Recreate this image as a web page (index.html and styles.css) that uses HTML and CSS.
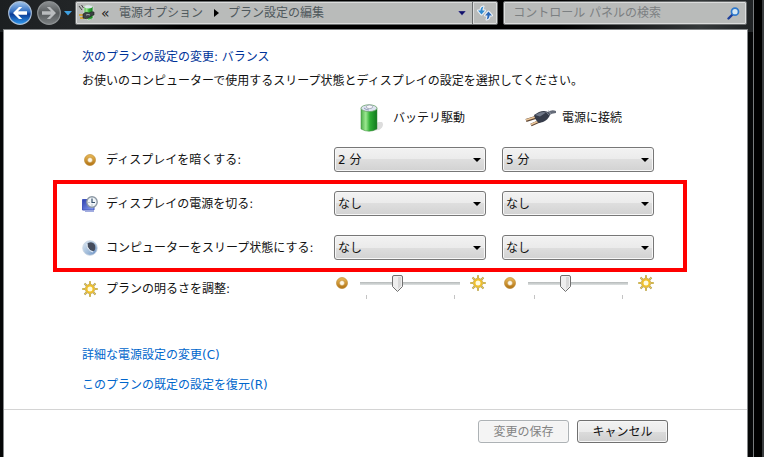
FILE: index.html
```html
<!doctype html>
<html lang="ja">
  <head>
    <meta charset="UTF-8" />
    <title>プラン設定の編集</title>
    <link rel="stylesheet" href="styles.css">
  </head>
  <body>
    <!-- shared icons -->
    <svg class="defs" width="0" height="0" aria-hidden="true">
      <defs>
        <linearGradient id="gold" x1="0" y1="0" x2="0" y2="1">
          <stop offset="0" stop-color="#e3b251" />
          <stop offset="1" stop-color="#b87a1a" />
        </linearGradient>
        <linearGradient id="green" x1="0" y1="0" x2="1" y2="0">
          <stop offset="0" stop-color="#4fae4c" />
          <stop offset="0.3" stop-color="#9be890" />
          <stop offset="0.55" stop-color="#2fae35" />
          <stop offset="1" stop-color="#117a1e" />
        </linearGradient>
        <linearGradient id="screen" x1="0" y1="0" x2="1" y2="1">
          <stop offset="0" stop-color="#2c3fae" />
          <stop offset="1" stop-color="#8fa6f5" />
        </linearGradient>
        <linearGradient id="moon" x1="0" y1="0" x2="1" y2="1">
          <stop offset="0" stop-color="#dfe9f3" />
          <stop offset="0.6" stop-color="#9db9d8" />
          <stop offset="1" stop-color="#5f86c0" />
        </linearGradient>
        <linearGradient id="blue" x1="0" y1="0" x2="0" y2="1">
          <stop offset="0" stop-color="#9fc4ec" />
          <stop offset="0.45" stop-color="#2f6cc0" />
          <stop offset="0.55" stop-color="#0b3a94" />
          <stop offset="1" stop-color="#2f9af0" />
        </linearGradient>
        <linearGradient id="grey" x1="0" y1="0" x2="0" y2="1">
          <stop offset="0" stop-color="#8c9092" />
          <stop offset="0.5" stop-color="#55595b" />
          <stop offset="1" stop-color="#7d8183" />
        </linearGradient>
      </defs>
      <symbol id="icon-ring" viewBox="0 0 16 16">
        <circle cx="8" cy="8" r="4" fill="none" stroke="url(#gold)" stroke-width="3.4" />
        <circle cx="8" cy="8" r="5.5" fill="none" stroke="#b98a3c" stroke-width="0.5" />
        <circle cx="8" cy="8" r="2.5" fill="#fff8e6" stroke="#b98632" stroke-width="0.5" />
      </symbol>
      <symbol id="icon-sun" viewBox="0 0 16 16">
        <path d="M8 0.3V3M8 13v2.7M0.3 8H3M13 8h2.7M2.5 2.5l2 2M11.5 11.5l2 2M2.5 13.5l2-2M11.5 4.5l2-2" stroke="#b3a05a" stroke-width="2" />
        <path d="M8 0.6V3M8 13v2.4M0.6 8H3M13 8h2.4M2.8 2.8l1.7 1.7M11.5 11.5l1.7 1.7M2.8 13.2l1.7-1.7M11.5 4.5l1.7-1.7" stroke="#f2cf45" />
        <circle cx="8" cy="8" r="3.6" fill="#fffbe0" stroke="#efc02a" stroke-width="2.2" />
        <circle cx="8" cy="8" r="4.8" fill="none" stroke="#b08a2a" stroke-width="0.5" />
      </symbol>
    </svg>

    <div class="window">
      <header class="toolbar">
        <nav class="history">
          <button class="round-btn" aria-label="戻る">
            <svg width="24" height="24" viewBox="0 0 24 24">
              <circle cx="12" cy="12" r="11.3" fill="url(#blue)" stroke="#a9bfd8" stroke-width="1.2" />
              <path d="M5 12l6-6h3.2l-4.2 4.3h9v3.4h-9l4.2 4.3H11z" fill="#fff" />
            </svg>
          </button>
          <button class="round-btn" aria-label="進む">
            <svg width="24" height="24" viewBox="0 0 24 24">
              <circle cx="12" cy="12" r="11.3" fill="url(#grey)" stroke="#8d9193" stroke-width="1.2" />
              <path d="M19 12l-6-6H9.800l4.200 4.300H5v3.400h9l-4.200 4.300H13z" fill="#b9bcbe" />
            </svg>
          </button>
          <button class="history-menu" aria-label="最近のページ">
            <svg width="8" height="5" viewBox="0 0 8 5"><path d="M0 0h8L4 4.500z" fill="#3fa0e0" /></svg>
          </button>
        </nav>

        <div class="address">
          <svg width="18" height="18" viewBox="0 0 18 18" aria-hidden="true">
            <path d="M6 2.500q4-2.500 9 0v12q-4 3-9 0z" fill="url(#green)" stroke="#d9e6d6" stroke-width="0.8" />
            <ellipse cx="10.500" cy="2.800" rx="3.800" ry="1.600" fill="#dfe5ee" />
            <path d="M1 2l3 4M3.500 1l2 3" stroke="#444" stroke-width="1" />
            <path d="M1 11h4M2 14h4" stroke="#d8a018" stroke-width="1.600" />
            <path d="M5 10q3-3 6-1 3-2 5-1v3q-2 0-4 2-3 3-7 1z" fill="#3c4144" stroke="#222" stroke-width="0.600" />
            <path d="M8 11q2-1 4 0" stroke="#a4aaae" fill="none" />
          </svg>
          <span class="chevrons">«</span>
          <a class="crumb" href="#">電源オプション</a>
          <svg width="5" height="8" viewBox="0 0 5 8" aria-hidden="true"><path d="M0 0l5 4-5 4z" fill="#000" /></svg>
          <a class="crumb" href="#">プラン設定の編集</a>
          <button class="address-menu" aria-label="以前の場所">
            <svg width="8" height="5" viewBox="0 0 8 5"><path d="M0 0h8L4 4.500z" fill="#10106a" stroke="#e4e4ea" stroke-width="0.300" /></svg>
          </button>
          <button class="refresh" aria-label="最新の情報に更新">
            <svg width="16" height="16" viewBox="0 0 16 16">
              <g stroke="#eef4fa" stroke-width="2" stroke-linejoin="round" fill="#eef4fa">
                <path d="M6.500 1.500Q3.500 2 3.500 5.500H1L4.500 9.500 8 5.500H5.500Q5.500 3.500 6.500 1.500z" />
                <path d="M9.500 14.500q3-.5 3-4H15l-3.500-4-3.500 4h2.500q0 2-1 4z" />
              </g>
              <path d="M6.500 1.500Q3.500 2 3.500 5.500H1L4.500 9.500 8 5.500H5.500Q5.500 3.500 6.500 1.500z" fill="#318bd0" />
              <path d="M9.500 14.500q3-.5 3-4H15l-3.500-4-3.500 4h2.500q0 2-1 4z" fill="#2a68b8" />
            </svg>
          </button>
        </div>

        <label class="search">
          <input type="search" placeholder="コントロール パネルの検索" aria-label="コントロール パネルの検索" />
          <svg width="13" height="13" viewBox="0 0 13 13" aria-hidden="true">
            <path d="M6 7L1.500 11.500" stroke="#1d3f9c" stroke-width="2.400" stroke-linecap="round" />
            <circle cx="8" cy="4.700" r="3.500" fill="#d6e8f4" stroke="#2d78cc" stroke-width="1.700" />
          </svg>
        </label>
      </header>

      <main class="content">
        <div class="block">
          <h1>次のプランの設定の変更: バランス</h1>
          <p>お使いのコンピューターで使用するスリープ状態とディスプレイの設定を選択してください。</p>
        </div>

        <div class="block row sources">
          <span></span>
          <div class="source">
            <svg width="24" height="30" viewBox="0 0 24 30" aria-hidden="true">
              <path d="M10 28l9-1q6-4 3-8l-4 0z" fill="#bbb" opacity="0.5" />
              <path d="M1 5.500q8 4 16 0v20.500q-8 4.500-16 0z" fill="url(#green)" stroke="#3d8a3d" stroke-width="0.500" />
              <ellipse cx="9" cy="5.200" rx="8" ry="3.400" fill="#dde3f0" stroke="#6ba36b" stroke-width="0.800" />
              <ellipse cx="9.500" cy="3.800" rx="3.200" ry="1.800" fill="#f6f7fa" stroke="#8d93a6" stroke-width="0.700" />
              <path d="M4 5q2 2 5 2" fill="none" stroke="#7e8aa8" stroke-width="0.800" />
            </svg>
            <span>バッテリ駆動</span>
          </div>
          <div class="source plugged">
            <svg width="33" height="18" viewBox="0 0 33 18" aria-hidden="true">
              <path d="M13 8L2 11.500M16 12l-9 4" stroke="#5d4534" stroke-width="3" />
              <path d="M13 7.500L2 11M16 11.500l-9 4" stroke="#ecc79a" stroke-width="1.600" />
              <path d="M32 2q-5-2-10 2l2 3q4-3 8-3z" fill="#656b78" />
              <path d="M10 6l5-3q5-2 9 0l2 3q-2 5-7 7l-4 1q-4-3-5-8z" fill="#363c4a" />
              <path d="M11 6l5-2.500q4-1 6 0l-6 4z" fill="#717989" />
              <path d="M22 2.500l3.500 4M24.500 1.500L27 5" stroke="#969dab" stroke-width="0.800" />
            </svg>
            <span>電源に接続</span>
          </div>
        </div>

        <div class="block row first">
          <div class="setting">
            <svg width="16" height="16" aria-hidden="true"><use href="#icon-ring" /></svg>
            <span id="dimLabel">ディスプレイを暗くする:</span>
          </div>
          <select aria-labelledby="dimLabel"><option>2 分</option></select>
          <select aria-labelledby="dimLabel"><option>5 分</option></select>
        </div>

        <div class="highlight">
          <div class="row">
            <div class="setting">
              <svg width="16" height="16" viewBox="0 0 16 16" aria-hidden="true">
                <path d="M0.500 3.500H12V14H0.500z" fill="url(#screen)" stroke="#4356bd" />
                <path d="M3 15.300h9" stroke="#98a4dc" stroke-width="1.200" />
                <circle cx="10" cy="6" r="5.200" fill="#f1f5f8" stroke="#8b97a3" stroke-width="1.400" />
                <path d="M10 2.500V6.500h3" fill="none" stroke="#36506c" stroke-width="1.200" />
                <path d="M6.500 6.500h1M10 9.500v-1" stroke="#8093a7" />
              </svg>
              <span id="offLabel">ディスプレイの電源を切る:</span>
            </div>
            <select aria-labelledby="offLabel"><option>なし</option></select>
            <select aria-labelledby="offLabel"><option>なし</option></select>
          </div>
          <div class="row">
            <div class="setting">
              <svg width="16" height="16" viewBox="0 0 16 16" aria-hidden="true">
                <circle cx="8" cy="8" r="7.300" fill="url(#moon)" stroke="#c9d4e0" stroke-width="0.800" />
                <path d="M6 3q5-2 7 2 1 4-1 6-5 0-7-5 0-2 1-3z" fill="#454c5c" />
                <path d="M5 4q0 6 6 8" fill="none" stroke="#f0f5fa" stroke-width="1" />
              </svg>
              <span id="sleepLabel">コンピューターをスリープ状態にする:</span>
            </div>
            <select aria-labelledby="sleepLabel"><option>なし</option></select>
            <select aria-labelledby="sleepLabel"><option>なし</option></select>
          </div>
        </div>

        <div class="block row brightness">
          <div class="setting">
            <svg width="16" height="16" aria-hidden="true"><use href="#icon-sun" /></svg>
            <span id="brightLabel">プランの明るさを調整:</span>
          </div>
          <div class="slider">
            <svg width="16" height="16" aria-hidden="true"><use href="#icon-ring" /></svg>
            <input type="range" min="0" max="100" value="36" aria-labelledby="brightLabel" />
            <svg width="16" height="16" aria-hidden="true"><use href="#icon-sun" /></svg>
          </div>
          <div class="slider">
            <svg width="16" height="16" aria-hidden="true"><use href="#icon-ring" /></svg>
            <input type="range" min="0" max="100" value="36" aria-labelledby="brightLabel" />
            <svg width="16" height="16" aria-hidden="true"><use href="#icon-sun" /></svg>
          </div>
        </div>

        <div class="block links">
          <a href="#">詳細な電源設定の変更(C)</a>
          <a href="#">このプランの既定の設定を復元(R)</a>
        </div>

        <footer class="actions">
          <button class="btn" disabled>変更の保存</button>
          <button class="btn">キャンセル</button>
        </footer>
      </main>
    </div>
  </body>
</html>
```
FILE: styles.css
```css
:root {
  --heading-color: #003399;
  --link-color: #0066cc;
  --text-color: #111;
  --field-color: #b9bbba;
  --highlight-color: #ff0000;
}

* {
  margin: 0;
  padding: 0;
  box-sizing: border-box;
}

body {
  display: flex;
  min-height: 100vh;
  padding-right: 8px;
  background-color: #000;
  border-right: 2px solid #3a3d3f;
  color: var(--text-color);
  font-family: "DejaVu Sans", "Noto Sans CJK JP", sans-serif;
  font-size: 12px;
  line-height: 24px;
}

.defs {
  position: absolute;
}

svg {
  display: block;
  flex: none;
}

button,
input,
select {
  font: inherit;
}

.window {
  flex: 1;
  display: flex;
  flex-direction: column;
  padding: 0 5px 0 3px;
  background: linear-gradient(90deg, #1c1f21 0, #222527 70px, #000 180px, #000 560px, #34383a 700px, #202325 100%) top / 100% 32px no-repeat #050607;
  border-right: 1px solid #777a7c;
}

/* toolbar */

.toolbar {
  display: flex;
  height: 29px;
  padding: 1px 1px 4px 5px;
}

.history {
  display: flex;
  align-items: center;
  gap: 5px;
  width: 67px;
}

.round-btn {
  height: 24px;
  background: none;
  border: none;
  border-radius: 50%;
}

.history-menu,
.address-menu,
.refresh {
  background: none;
  border: none;
}

.history-menu {
  margin-left: -2px;
}

.address,
.search {
  display: flex;
  align-items: center;
  background-color: var(--field-color);
  border: 1px solid #696c6d;
  border-radius: 2px;
  box-shadow: inset 0 0 0 1px #dcdddd;
}

.address {
  flex: 436;
  padding-left: 2px;
}

.chevrons {
  width: 23px;
  padding-left: 5px;
  color: #222;
  font-size: 14px;
}

.crumb {
  margin-right: 11px;
  color: #4f585c;
  text-decoration: none;
}

.address svg + .crumb {
  margin-left: 9px;
}

.address-menu {
  margin-left: auto;
  padding: 0 6px;
}

.refresh {
  align-self: stretch;
  padding: 0 4px;
  border-left: 1px solid #686b6c;
  box-shadow: inset 1px 0 #dcdddd;
}

.search {
  flex: 236;
  margin-left: 5px;
  padding: 0 6px 0 9px;
}

.search input {
  flex: 1;
  min-width: 0;
  background: none;
  border: none;
  outline: none;
}

.search input::placeholder {
  color: #7c8082;
}

/* content */

.content {
  flex: 1;
  padding-top: 15px;
  background-color: #fff;
  border: 1px solid #85888a;
  border-width: 1px 1px 0;
}

.block {
  margin-left: 49px;
  padding: 0 29px;
}

h1 {
  color: var(--heading-color);
  font-size: 12px;
  font-weight: normal;
}

.row {
  display: grid;
  grid-template-columns: 252px 152px 152px;
  align-items: center;
}

.row > :last-child {
  margin-left: 16px;
  margin-right: -16px;
}

.sources {
  height: 50px;
}

.source {
  display: flex;
  align-items: center;
  gap: 9px;
  padding-left: 26px;
}

.plugged {
  gap: 5px;
  padding-left: 22px;
}

.setting {
  display: flex;
  align-items: center;
  gap: 8px;
}

.first {
  padding-top: 4px;
  padding-bottom: 8px;
}

.highlight {
  display: grid;
  row-gap: 19px;
  margin-left: 49px;
  margin-right: 60px;
  padding: 7px 25px 8px;
  border: 4px solid var(--highlight-color);
}

select {
  height: 25px;
  padding: 0 20px 0 3px;
  appearance: none;
  background:
    url("data:image/svg+xml,%3Csvg xmlns='http://www.w3.org/2000/svg' width='8' height='4'%3E%3Cpath d='M0 0h8L4 4z'/%3E%3C/svg%3E") right 4px center no-repeat,
    linear-gradient(#f2f2f2, #ebebeb 50%, #dedede 50%, #d2d2d2);
  border: 1px solid #777;
  border-radius: 3px;
  box-shadow: inset 0 0 0 1px #f7f7f7;
  color: var(--text-color);
}

/* sliders */

.brightness {
  height: 34px;
}

.slider {
  display: flex;
  align-items: flex-start;
  gap: 10px;
  height: 28px;
}

.slider input {
  flex: 1;
  min-width: 0;
  height: 24px;
  appearance: none;
  background:
    linear-gradient(#c4c4c4, #c4c4c4) 6px 100% / 1px 4px no-repeat,
    linear-gradient(#c4c4c4, #c4c4c4) calc(100% - 5px) 100% / 1px 4px no-repeat,
    linear-gradient(#b4b8b8, #dfe3e3) 0 7px / 100% 3px no-repeat;
}

.slider input::-webkit-slider-thumb {
  width: 11px;
  height: 17px;
  margin-bottom: 7px;
  appearance: none;
  background: url("data:image/svg+xml,%3Csvg xmlns='http://www.w3.org/2000/svg' width='11' height='17'%3E%3Cpath d='M2 .5h7q1.500 0 1.500 1.500v9.500l-5 5-5-5V2Q.5.5 2 .5z' fill='%23eeeeee' stroke='%23707070'/%3E%3Cpath d='M6 2h3v9l-3 3z' fill='%23d8d8d8'/%3E%3C/svg%3E") no-repeat;
}

/* links and buttons */

.links {
  display: flex;
  flex-direction: column;
  align-items: flex-start;
  padding-top: 34px;
  padding-bottom: 9px;
  line-height: 30px;
}

.links a {
  color: var(--link-color);
  text-decoration: none;
}

.actions {
  display: flex;
  justify-content: flex-end;
  gap: 8px;
  padding: 10px 79px 13px;
  border-top: 1px solid #d4d4d4;
}

.btn {
  width: 91px;
  height: 23px;
  background: linear-gradient(#f2f2f2, #ebebeb 50%, #dcdcdc 50%, #cfcfcf);
  border: 1px solid #707070;
  border-radius: 3px;
  box-shadow: inset 0 0 0 1px #f7f7f7;
  color: var(--text-color);
  line-height: 20px;
}

.btn:disabled {
  background: #f4f4f4;
  border-color: #adb2b5;
  color: #838383;
}
```
